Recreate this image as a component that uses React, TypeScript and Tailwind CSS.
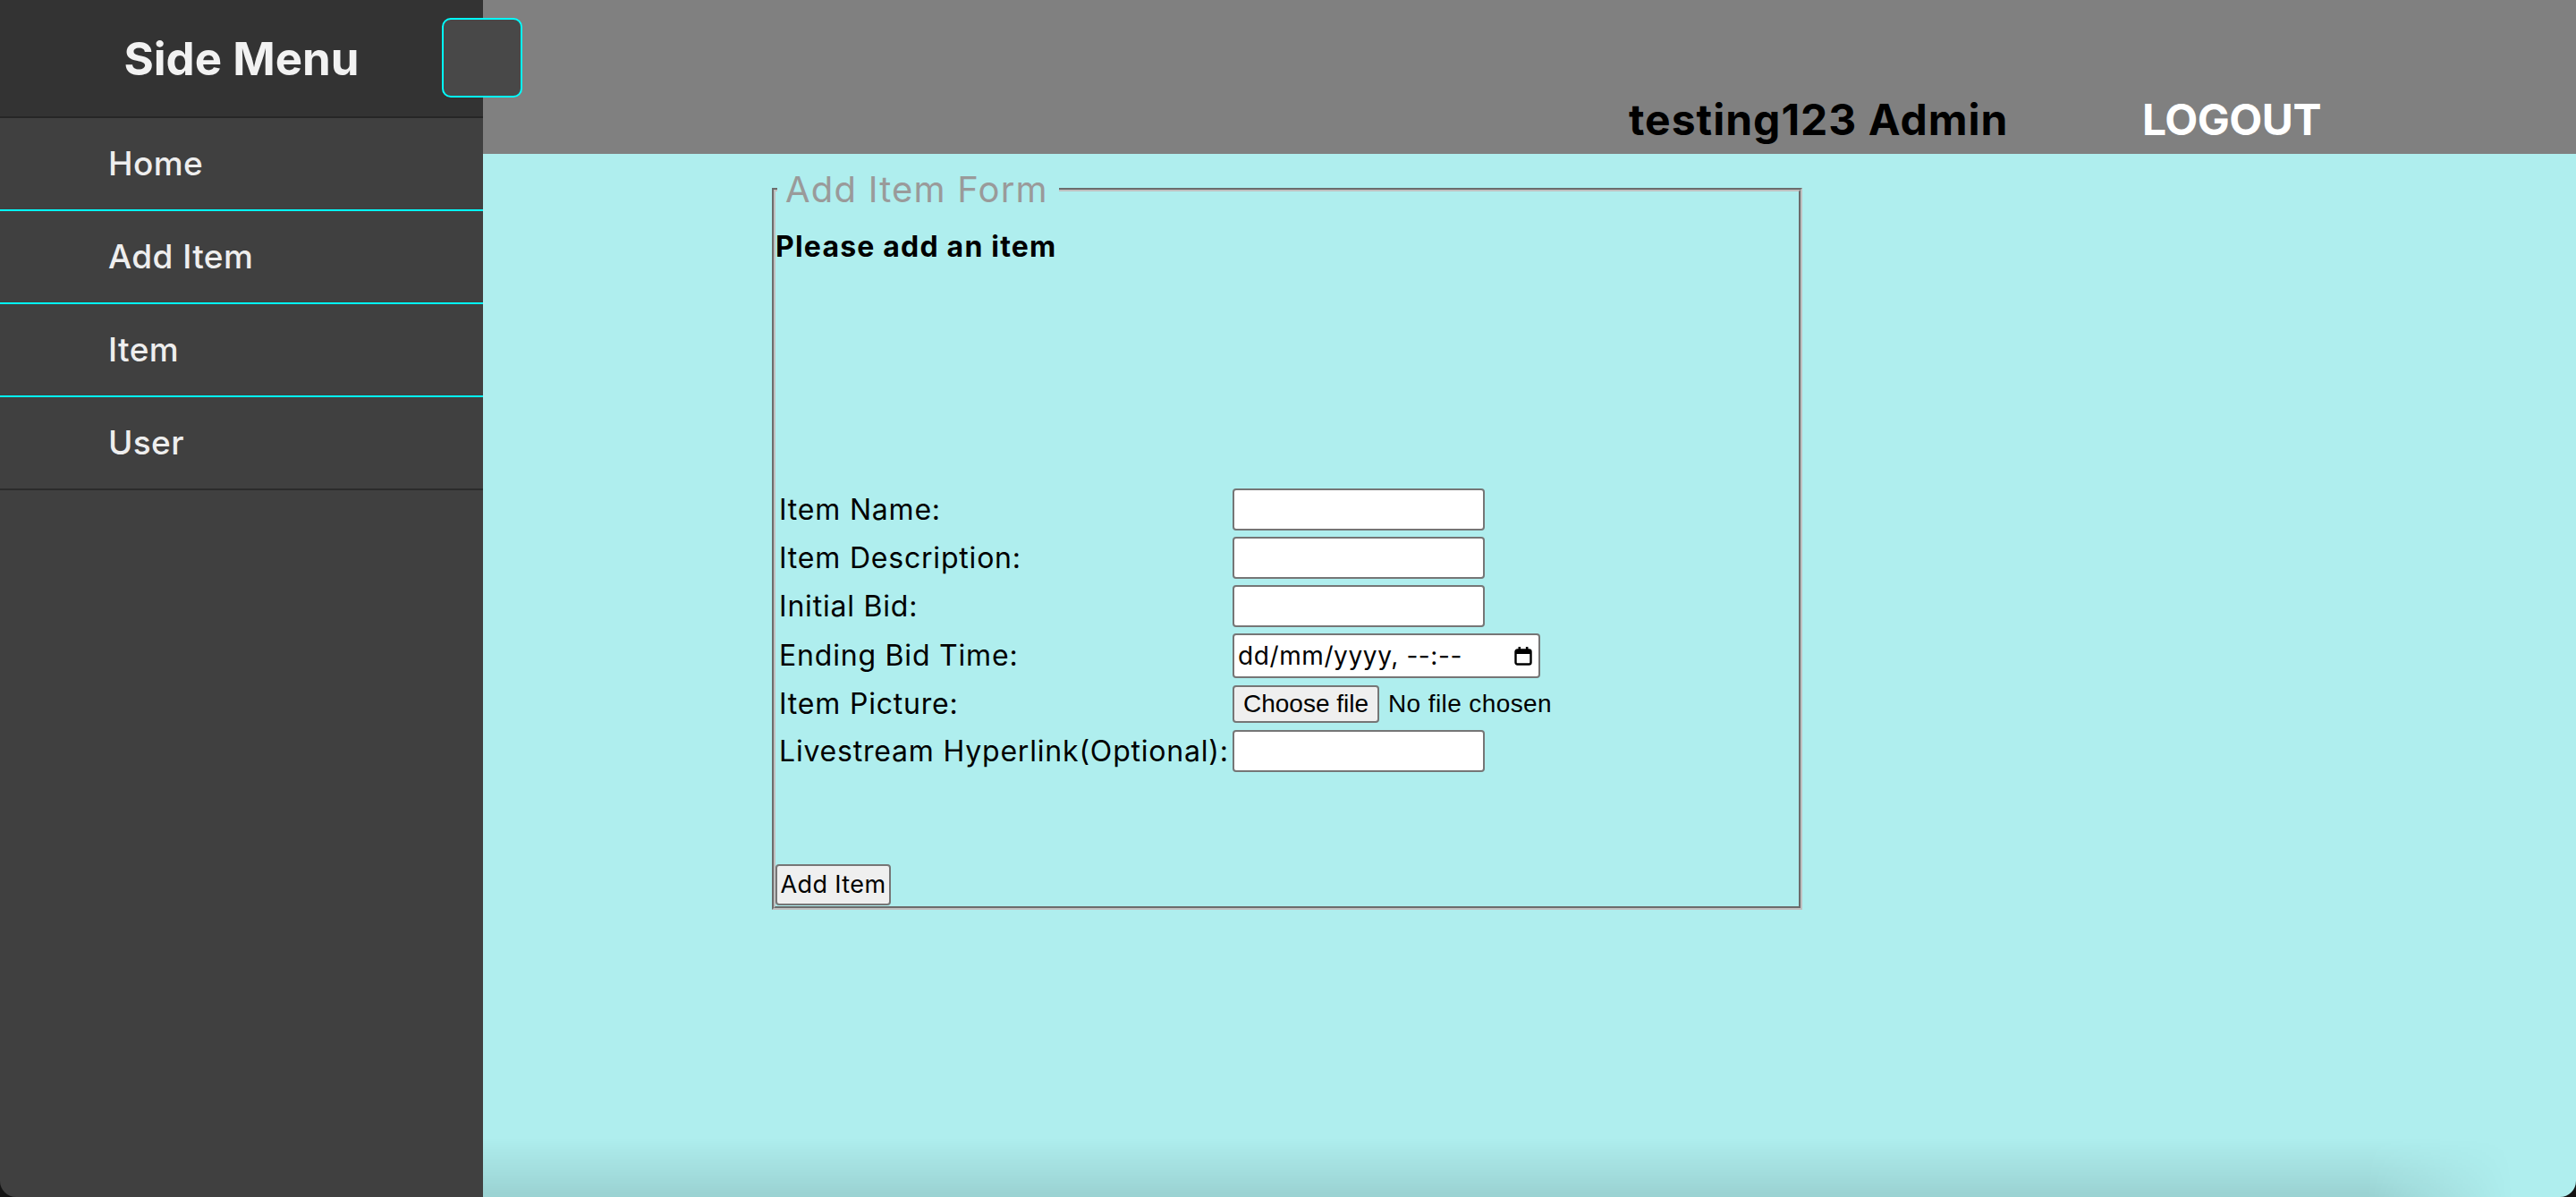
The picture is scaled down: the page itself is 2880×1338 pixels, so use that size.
import React from "react";

const menu = ["Home", "Add Item", "Item", "User"];

function CalendarIcon() {
  return (
    <svg width="20" height="22" viewBox="0 0 20 22" aria-hidden="true">
      <rect x="1.5" y="4.5" width="17" height="16" rx="2" fill="none" stroke="black" strokeWidth="2.4" />
      <rect x="1.5" y="4.5" width="17" height="4.5" fill="black" />
      <rect x="4.5" y="1" width="2.6" height="4" rx="0.6" fill="black" />
      <rect x="12.9" y="1" width="2.6" height="4" rx="0.6" fill="black" />
    </svg>
  );
}

function TextBox() {
  return <div className="h-[47px] w-[282px] rounded-[4px] border-2 border-[#767676] bg-white" />;
}

export default function App() {
  return (
    <div className="h-[1338px] w-[2880px] bg-[#141414]">
      <div className="relative flex h-full w-full overflow-hidden rounded-b-[18px] [font-family:Inter,sans-serif]">
        <aside className="flex w-[540px] shrink-0 flex-col bg-[#404040]">
          <div className="flex h-[132px] items-center justify-center border-b-2 border-[#262626] bg-[#333333]">
            <span className="text-[51px] font-bold leading-none text-[#f2f2f2]">Side Menu</span>
          </div>
          {menu.map((m, i) => (
            <a
              key={m}
              className={
                i < 3
                  ? "flex h-[104px] items-center border-b-2 border-[#00ffff] pl-[121px] text-[37px] font-medium tracking-[0.4px] text-[#eeeeee]"
                  : "flex h-[104px] items-center border-b-2 border-[#2b2b2b] pl-[121px] text-[37px] font-medium tracking-[0.4px] text-[#eeeeee]"
              }
            >
              {m}
            </a>
          ))}
        </aside>

        <button className="absolute left-[494px] top-[20px] z-10 h-[89px] w-[90px] rounded-[10px] border-2 border-[#00ffff] bg-[#484848]" />

        <main className="relative flex flex-1 flex-col bg-[#afeeee]">
          <header className="flex h-[172px] shrink-0 bg-[#808080] pl-[1281px] pt-[98px]">
            <span className="w-[574px] text-[48px] font-bold leading-[72px] tracking-[1px] text-black">testing123 Admin</span>
            <span className="text-[48px] font-bold leading-[72px] tracking-[-0.5px] text-white">LOGOUT</span>
          </header>

          <div className="pl-[323px] pt-[10px]">
            <fieldset className="w-[1152px] border-4 border-[#c0c0c0] [border-style:groove]">
              <legend className="ml-[2px] pl-[9px] pr-[12px] text-[40px] leading-[60px] tracking-[1.2px] text-[#9a9a9a]">
                Add Item Form
              </legend>
              <p className="mt-[10px] text-[32px] font-bold leading-[48px] tracking-[1.2px] text-black">Please add an item</p>

              <div className="mt-[244px] grid grid-cols-[507px_auto] gap-y-[3px] pl-[4px] text-[32px] leading-[40px] tracking-[0.8px] text-black">
                <div className="flex items-center py-[2px]">Item Name:</div>
                <div className="flex items-center py-[2px]"><TextBox /></div>

                <div className="flex items-center py-[2px]">Item Description:</div>
                <div className="flex items-center py-[2px]"><TextBox /></div>

                <div className="flex items-center py-[2px]">Initial Bid:</div>
                <div className="flex items-center py-[2px]"><TextBox /></div>

                <div className="flex items-center py-[2px]">Ending Bid Time:</div>
                <div className="flex items-center py-[2px]">
                  <div className="flex h-[50px] w-[344px] items-center justify-between rounded-[4px] border-2 border-[#767676] bg-white pl-[4px] pr-[7px] text-[28px] tracking-[0.6px]">
                    <span>dd/mm/yyyy, --:--</span>
                    <CalendarIcon />
                  </div>
                </div>

                <div className="flex items-center py-[2px] leading-[44px]">Item Picture:</div>
                <div className="flex items-center py-[2px] tracking-normal [font-family:'Liberation_Sans',Arial,sans-serif]">
                  <span className="flex h-[42px] w-[164px] items-center justify-center rounded-[4px] border-2 border-[#767676] bg-[#efefef] text-[28px]">
                    Choose file
                  </span>
                  <span className="ml-[10px] text-[28px] tracking-[0.4px]">No file chosen</span>
                </div>

                <div className="flex items-center py-[2px]">Livestream Hyperlink(Optional):</div>
                <div className="flex items-center py-[2px]"><TextBox /></div>
              </div>

              <button className="mt-[101px] mb-[1px] flex h-[46px] w-[129px] items-center justify-center rounded-[4px] border-2 border-[#767676] bg-[#efefef] text-[27px] tracking-[0.4px] text-black">
                Add Item
              </button>
            </fieldset>
          </div>

          <div className="pointer-events-none absolute bottom-0 left-0 right-0 h-[66px] bg-linear-to-b from-transparent to-[#0000001e] [mask-image:linear-gradient(to_right,black_90%,transparent_97%)]" />
        </main>
      </div>
    </div>
  );
}
